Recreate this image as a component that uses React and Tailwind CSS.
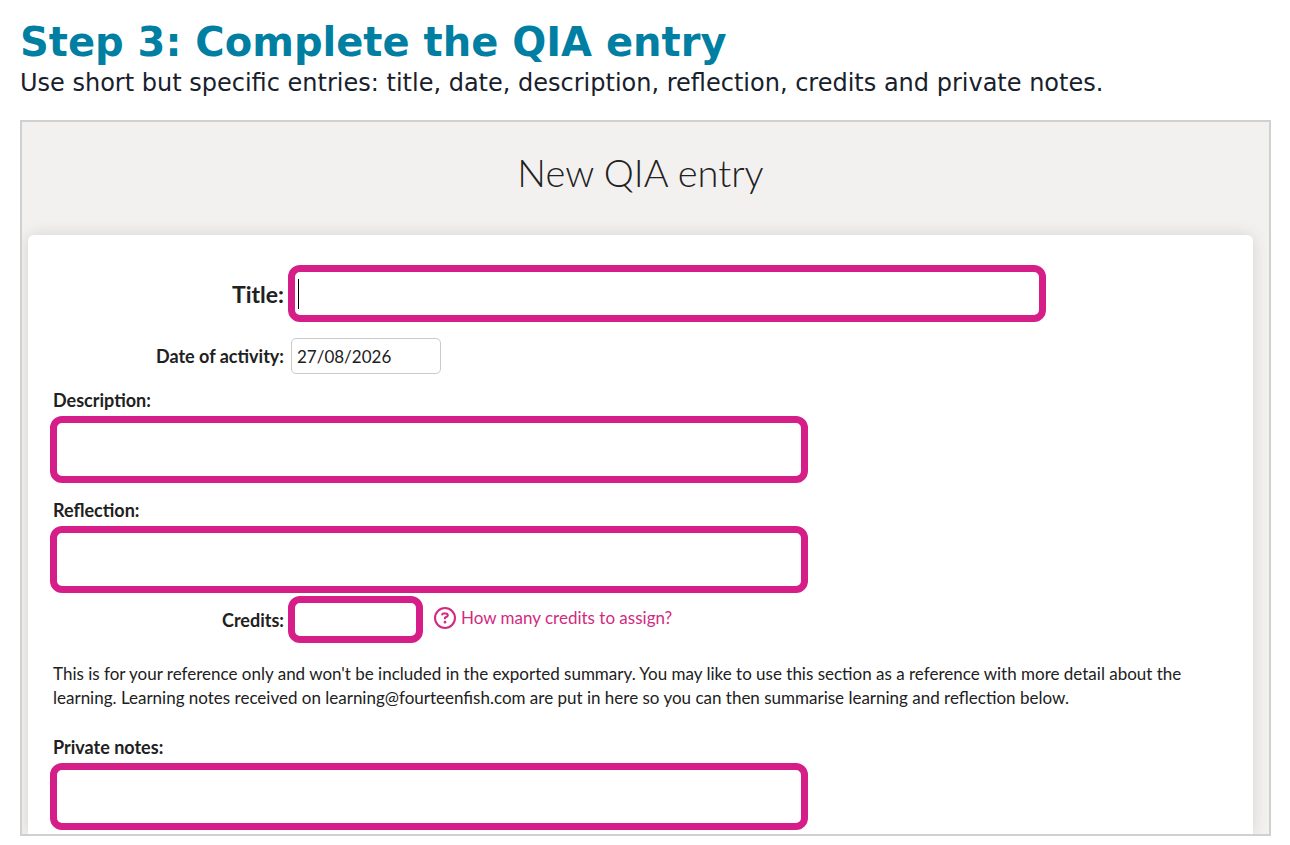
import { useState } from 'react';
import { FaRegCircleQuestion } from 'react-icons/fa6';

const highlight =
  'block w-full border-[7px] border-[#d61e88] rounded-xl bg-white outline-none';

function NotesField({ id, label, value, onChange, className }) {
  return (
    <div className={className}>
      <label
        htmlFor={id}
        className="block pl-[3px] mb-1 text-lg leading-6 font-bold"
      >
        {label}
      </label>
      <textarea
        id={id}
        value={value}
        onChange={(e) => onChange(id, e.target.value)}
        className={`${highlight} max-w-[758px] h-[67px] px-1 resize-none`}
      />
    </div>
  );
}

export default function App() {
  const [entry, setEntry] = useState({
    title: '',
    date: '27/08/2026',
    description: '',
    reflection: '',
    credits: '',
    privateNotes: ''
  });
  const update = (key, value) => {
    setEntry((prev) => ({ ...prev, [key]: value }));
  };
  return (
    <main className="pl-5 pr-[19px] pt-5 pb-2 bg-white">
      <header className="font-['DejaVu_Sans',sans-serif]">
        <h1 className="text-[40px] leading-[44px] font-bold text-[#007fa3]">
          Step 3: Complete the QIA entry
        </h1>
        <p className="text-2xl leading-[38px] text-[#18212b]">
          Use short but specific entries: title, date, description, reflection,
          credits and private notes.
        </p>
      </header>
      <section className="mt-[18px] border-2 border-[#d0d0d0] bg-[#f3f1ef] pl-[6px] pr-4 overflow-hidden font-[Lato,sans-serif] text-[17px] leading-6 text-[#212121]">
        <h2 className="pt-[26px] pb-[38px] text-[38px] leading-[49px] font-light text-center">
          New QIA entry
        </h2>
        <form className="rounded-t-md bg-white px-[22px] pt-[30px] pb-1 shadow-[0_0_16px_rgba(0,0,0,0.12)]">
          <div className="flex items-center gap-1">
            <label
              htmlFor="title"
              className="w-[234px] shrink-0 text-right text-[23px] leading-6 font-bold"
            >
              Title:
            </label>
            <div
              className={`${highlight} max-w-[758px] h-[57px] flex items-center pl-[3px]`}
            >
              {!entry.title && <span className="w-px h-[30px] bg-black" />}
              <input
                id="title"
                type="text"
                value={entry.title}
                onChange={(e) => update('title', e.target.value)}
                className="flex-1 min-w-0 h-full text-2xl outline-none"
              />
            </div>
          </div>
          <div className="flex items-center gap-[7px] mt-4">
            <label
              htmlFor="date"
              className="w-[234px] shrink-0 text-right text-lg leading-6 font-bold"
            >
              Date of activity:
            </label>
            <input
              id="date"
              type="text"
              value={entry.date}
              onChange={(e) => update('date', e.target.value)}
              className="w-[150px] h-9 px-[5px] border border-[#cacaca] rounded-[5px] outline-none"
            />
          </div>
          <NotesField
            id="description"
            label="Description:"
            value={entry.description}
            onChange={update}
            className="mt-[14px]"
          />
          <NotesField
            id="reflection"
            label="Reflection:"
            value={entry.reflection}
            onChange={update}
            className="mt-[15px]"
          />
          <div className="flex items-center mt-[3px]">
            <label
              htmlFor="credits"
              className="w-[234px] mr-1 shrink-0 text-right text-lg leading-6 font-bold"
            >
              Credits:
            </label>
            <input
              id="credits"
              type="text"
              value={entry.credits}
              onChange={(e) => update('credits', e.target.value)}
              className={`${highlight} max-w-[135px] h-[47px] px-1`}
            />
            <a
              href="#credits"
              className="flex items-center gap-[5px] ml-[11px] pb-1 text-[#d22a80]"
            >
              <FaRegCircleQuestion className="size-[22px]" />
              How many credits to assign?
            </a>
          </div>
          <p className="mt-[19px] px-[3px]">
            This is for your reference only and won't be included in the
            exported summary. You may like to use this section as a reference
            with more detail about the learning. Learning notes received on
            learning@fourteenfish.com are put in here so you can then summarise
            learning and reflection below.
          </p>
          <NotesField
            id="privateNotes"
            label="Private notes:"
            value={entry.privateNotes}
            onChange={update}
            className="mt-[25px]"
          />
        </form>
      </section>
    </main>
  );
}
